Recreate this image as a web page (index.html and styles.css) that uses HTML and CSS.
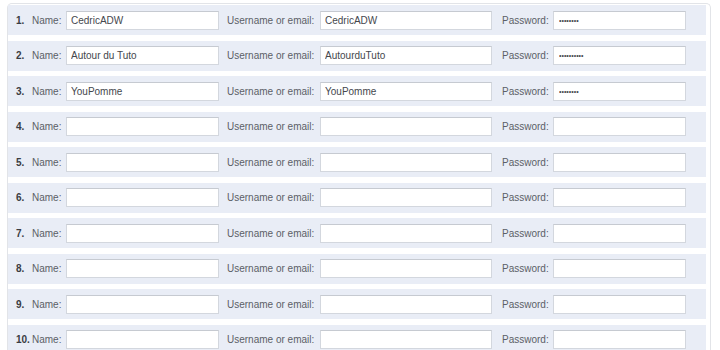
FILE: index.html
```html
<!DOCTYPE html>
<html lang="en">
<head>
  <meta charset="UTF-8" />
  <title>Accounts</title>
  <link rel="stylesheet" href="styles.css">
</head>
<body>
  <div class="accounts">
    <div class="row">
      <span class="num">1.</span><label>Name:</label><input type="text" class="name" value="CedricADW" />
      <label class="lbl">Username or email:</label><input type="text" class="user" value="CedricADW" />
      <label class="lbl">Password:</label><input type="password" class="pass" value="12345678" />
    </div>
    <div class="row">
      <span class="num">2.</span><label>Name:</label><input type="text" class="name" value="Autour du Tuto" />
      <label class="lbl">Username or email:</label><input type="text" class="user" value="AutourduTuto" />
      <label class="lbl">Password:</label><input type="password" class="pass" value="1234567890" />
    </div>
    <div class="row">
      <span class="num">3.</span><label>Name:</label><input type="text" class="name" value="YouPomme" />
      <label class="lbl">Username or email:</label><input type="text" class="user" value="YouPomme" />
      <label class="lbl">Password:</label><input type="password" class="pass" value="12345678" />
    </div>
    <div class="row">
      <span class="num">4.</span><label>Name:</label><input type="text" class="name" />
      <label class="lbl">Username or email:</label><input type="text" class="user" />
      <label class="lbl">Password:</label><input type="password" class="pass" />
    </div>
    <div class="row">
      <span class="num">5.</span><label>Name:</label><input type="text" class="name" />
      <label class="lbl">Username or email:</label><input type="text" class="user" />
      <label class="lbl">Password:</label><input type="password" class="pass" />
    </div>
    <div class="row">
      <span class="num">6.</span><label>Name:</label><input type="text" class="name" />
      <label class="lbl">Username or email:</label><input type="text" class="user" />
      <label class="lbl">Password:</label><input type="password" class="pass" />
    </div>
    <div class="row">
      <span class="num">7.</span><label>Name:</label><input type="text" class="name" />
      <label class="lbl">Username or email:</label><input type="text" class="user" />
      <label class="lbl">Password:</label><input type="password" class="pass" />
    </div>
    <div class="row">
      <span class="num">8.</span><label>Name:</label><input type="text" class="name" />
      <label class="lbl">Username or email:</label><input type="text" class="user" />
      <label class="lbl">Password:</label><input type="password" class="pass" />
    </div>
    <div class="row">
      <span class="num">9.</span><label>Name:</label><input type="text" class="name" />
      <label class="lbl">Username or email:</label><input type="text" class="user" />
      <label class="lbl">Password:</label><input type="password" class="pass" />
    </div>
    <div class="row">
      <span class="num">10.</span><label>Name:</label><input type="text" class="name" />
      <label class="lbl">Username or email:</label><input type="text" class="user" />
      <label class="lbl">Password:</label><input type="password" class="pass" />
    </div>
  </div>
</body>
</html>
```

FILE: styles.css
```css
* {
  box-sizing: border-box;
}
body {
  margin: 0;
  background: #fff;
  font-family: "Liberation Sans", Arial, sans-serif;
  font-size: 10px;
  color: #5c5f66;
}
.accounts {
  width: 704px;
  margin: 3px 0 0 7px;
  padding: 1px 4px 0 0;
  border: 1px solid #e2e4e8;
  border-bottom: none;
  border-radius: 5px 5px 0 0;
}
.row {
  display: grid;
  grid-template-columns: 16px 34px 153px 101px 172px 61px 133px;
  align-items: center;
  height: 30px;
  margin-bottom: 5.5px;
  padding-left: 8px;
  background: #e9edf6;
}
.num {
  font-weight: bold;
  color: #3a3c42;
}
.lbl {
  padding-left: 8px;
}
.lbl:nth-of-type(3) {
  padding-left: 10px;
}
input {
  height: 19px;
  width: 100%;
  margin: 0;
  padding: 0 4px;
  border: 1px solid #d3d7de;
  border-top-color: #c6cad1;
  background: #fff;
  font-family: "Liberation Sans", Arial, sans-serif;
  font-size: 10px;
  color: #45474d;
  outline: none;
}
.pass {
  font-size: 7px;
  padding-left: 5px;
}
```
